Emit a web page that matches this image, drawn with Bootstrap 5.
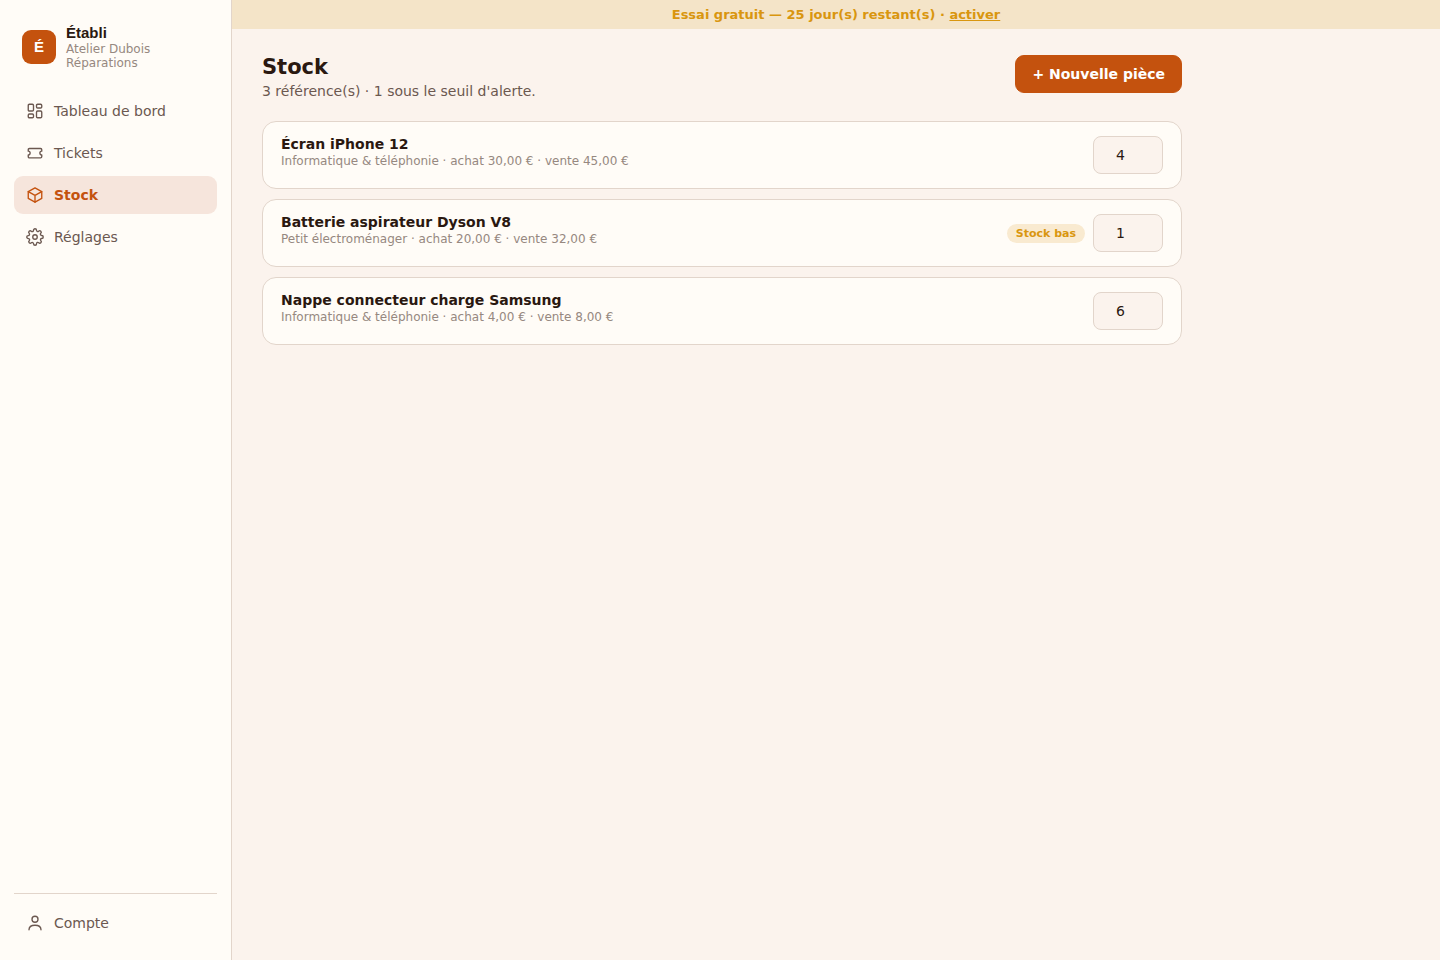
<!DOCTYPE html>
<html lang="fr">
<head>
<meta charset="utf-8">
<meta name="viewport" content="width=device-width, initial-scale=1">
<title>Établi – Stock</title>
<link href="https://cdn.jsdelivr.net/npm/bootstrap@5.3.0/dist/css/bootstrap.min.css" rel="stylesheet">
<style>
:root { --ink: #2a1810; --soft: #6b5850; --faint: #968880; --line: #e2d5cb; --surface: #fffcf7; --ground: #fbf3ed; --accent: #c4520e; --warn: #d9960f; }
body { font-family: "DejaVu Sans", sans-serif; font-size: 14px; line-height: 16px; color: var(--ink); background: var(--ground); }
.sidebar { width: 232px; background: var(--surface); border-right: 1px solid var(--line); padding: 22px 14px 18px; }
.brand-row { gap: 10px; padding: 2px 8px 22px; }
.brand-logo { width: 34px; height: 34px; border-radius: 9px; background: var(--accent); color: #fff; }
.brand-logo, .brand-name { font-family: "Liberation Sans", sans-serif; font-size: 15px; font-weight: 700; line-height: 18px; }
.brand-shop { font-size: 12px; line-height: 14px; color: var(--faint); }
.side-link { gap: 10px; height: 38px; padding: 0 12px; border-radius: 9px; color: var(--soft); text-decoration: none; }
.side-link.active { background: #f6e5dc; color: var(--accent); font-weight: 700; }
.side-link svg { width: 18px; height: 18px; flex: none; fill: none; stroke: currentColor; stroke-width: 1.8; stroke-linecap: round; stroke-linejoin: round; }
.side-foot { border-top: 1px solid var(--line); padding-top: 10px; }
.trial { background: #f4e4c8; color: var(--warn); font-size: 13px; font-weight: 700; line-height: 15px; padding: 7px 16px; }
.trial a { color: inherit; }
.content { max-width: 980px; padding: 26px 30px; }
.page-head { margin-bottom: 22px; }
.page-title { font-size: 21px; font-weight: 700; line-height: 24px; margin: 0 0 4px; }
.page-sub { font-size: 14px; color: var(--soft); }
.btn-new { --bs-btn-color: #fff; --bs-btn-bg: var(--accent); --bs-btn-border-color: var(--accent); --bs-btn-hover-color: #fff; --bs-btn-hover-bg: #a9450a; --bs-btn-border-radius: 9px; --bs-btn-padding-x: 16px; --bs-btn-padding-y: 10px; --bs-btn-font-size: 14px; --bs-btn-font-weight: 700; --bs-btn-line-height: 16px; }
.part-list { gap: 10px; }
.part { background: var(--surface); border: 1px solid var(--line); border-radius: 14px; padding: 14px 18px; gap: 8px; }
.part-name { font-size: 14px; font-weight: 700; line-height: 16px; margin: 0; }
.part-meta { font-size: 12px; line-height: 18px; color: var(--faint); margin: 0; }
.low-stock { background: #f9ead0; color: var(--warn); font-size: 11px; font-weight: 700; line-height: 13px; padding: 3px 9px; }
.part .qty { width: 70px; height: 38px; padding: 0 12px; font-size: 14px; text-align: center; color: var(--ink); background: var(--ground); border-color: var(--line); border-radius: 8px; }
</style>
</head>
<body>
<div class="d-flex min-vh-100">
  <aside class="sidebar d-flex flex-column flex-shrink-0">
    <div class="brand-row d-flex align-items-center">
      <div class="brand-logo d-flex align-items-center justify-content-center flex-shrink-0">É</div>
      <div>
        <div class="brand-name">Établi</div>
        <div class="brand-shop">Atelier Dubois Réparations</div>
      </div>
    </div>
    <nav class="d-flex flex-column gap-1">
      <a class="side-link d-flex align-items-center" href="#"><svg viewBox="0 0 24 24"><rect x="3" y="3" width="7" height="9" rx="1.500"/><rect x="14" y="3" width="7" height="5" rx="1.500"/><rect x="14" y="12" width="7" height="9" rx="1.500"/><rect x="3" y="16" width="7" height="5" rx="1.500"/></svg>Tableau de bord</a>
      <a class="side-link d-flex align-items-center" href="#"><svg viewBox="0 0 24 24"><path d="M3 7.500a1.500 1.500 0 0 1 1.500-1.500h15A1.500 1.500 0 0 1 21 7.500V9.500a2.500 2.500 0 0 0 0 5v2.500a1.500 1.500 0 0 1-1.500 1.500h-15A1.500 1.500 0 0 1 3 17v-2.500a2.500 2.500 0 0 0 0-5z"/></svg>Tickets</a>
      <a class="side-link active d-flex align-items-center" href="#" aria-current="page"><svg viewBox="0 0 24 24"><path d="M21 7.500 12 2.500 3 7.500v9l9 5 9-5z"/><path d="M3 7.500l9 5 9-5M12 12.500v9"/></svg>Stock</a>
      <a class="side-link d-flex align-items-center" href="#"><svg viewBox="0 0 24 24"><circle cx="12" cy="12" r="3"/><path d="M19.400 15a1.650 1.650 0 0 0 .33 1.820l.06.06a2 2 0 0 1-2.830 2.830l-.06-.06a1.650 1.650 0 0 0-1.820-.33 1.650 1.650 0 0 0-1 1.510V21a2 2 0 0 1-4 0v-.09A1.650 1.650 0 0 0 9 19.400a1.650 1.650 0 0 0-1.820.33l-.06.06a2 2 0 0 1-2.830-2.830l.06-.06a1.650 1.650 0 0 0 .33-1.820 1.650 1.650 0 0 0-1.510-1H3a2 2 0 0 1 0-4h.09A1.650 1.650 0 0 0 4.600 9a1.650 1.650 0 0 0-.33-1.820l-.06-.06a2 2 0 0 1 2.830-2.830l.06.06a1.650 1.650 0 0 0 1.820.33H9a1.650 1.650 0 0 0 1-1.510V3a2 2 0 0 1 4 0v.09a1.650 1.650 0 0 0 1 1.510 1.650 1.650 0 0 0 1.820-.33l.06-.06a2 2 0 0 1 2.830 2.830l-.06.06a1.650 1.650 0 0 0-.33 1.820V9a1.650 1.650 0 0 0 1.510 1H21a2 2 0 0 1 0 4h-.09a1.650 1.650 0 0 0-1.510 1z"/></svg>Réglages</a>
    </nav>
    <div class="side-foot mt-auto">
      <a class="side-link d-flex align-items-center" href="#"><svg viewBox="0 0 24 24"><circle cx="12" cy="7" r="4"/><path d="M4 21c0-3.500 3-6 8-6s8 2.500 8 6"/></svg>Compte</a>
    </div>
  </aside>
  <div class="flex-grow-1">
    <div class="trial text-center">Essai gratuit — 25 jour(s) restant(s) · <a href="#">activer</a></div>
    <main class="content">
      <header class="page-head d-flex justify-content-between align-items-start">
        <div>
          <h1 class="page-title">Stock</h1>
          <div class="page-sub">3 référence(s) · 1 sous le seuil d'alerte.</div>
        </div>
        <button type="button" class="btn btn-new">+ Nouvelle pièce</button>
      </header>
      <div class="part-list d-flex flex-column">
        <section class="part d-flex align-items-center">
          <div class="flex-grow-1 align-self-start">
            <h2 class="part-name">Écran iPhone 12</h2>
            <p class="part-meta">Informatique &amp; téléphonie · achat 30,00 € · vente 45,00 €</p>
          </div>
          <input class="qty form-control" type="number" value="4" aria-label="Quantité, Écran iPhone 12">
        </section>
        <section class="part d-flex align-items-center">
          <div class="flex-grow-1 align-self-start">
            <h2 class="part-name">Batterie aspirateur Dyson V8</h2>
            <p class="part-meta">Petit électroménager · achat 20,00 € · vente 32,00 €</p>
          </div>
          <span class="low-stock rounded-pill">Stock bas</span>
          <input class="qty form-control" type="number" value="1" aria-label="Quantité, Batterie aspirateur Dyson V8">
        </section>
        <section class="part d-flex align-items-center">
          <div class="flex-grow-1 align-self-start">
            <h2 class="part-name">Nappe connecteur charge Samsung</h2>
            <p class="part-meta">Informatique &amp; téléphonie · achat 4,00 € · vente 8,00 €</p>
          </div>
          <input class="qty form-control" type="number" value="6" aria-label="Quantité, Nappe connecteur charge Samsung">
        </section>
      </div>
    </main>
  </div>
</div>
<script src="https://cdn.jsdelivr.net/npm/bootstrap@5.3.0/dist/js/bootstrap.bundle.min.js"></script>
</body>
</html>
